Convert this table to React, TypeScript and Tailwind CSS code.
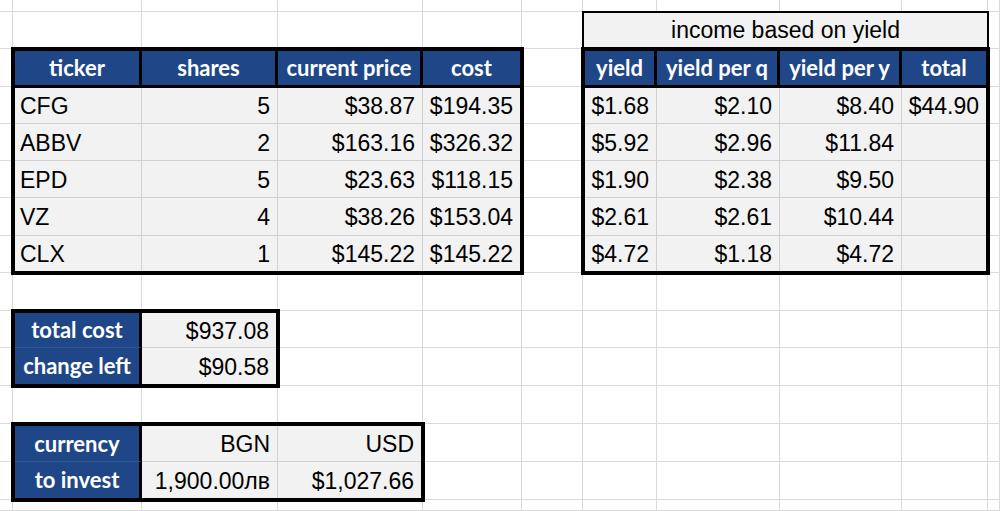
import React from "react";

const COL = ["col-start-1","col-start-2","col-start-3","col-start-4","col-start-5","col-start-6","col-start-7","col-start-8","col-start-9","col-start-10","col-start-11"];
const ROW = ["row-start-1","row-start-2","row-start-3","row-start-4","row-start-5","row-start-6","row-start-7","row-start-8","row-start-9","row-start-10","row-start-11","row-start-12","row-start-13","row-start-14","row-start-15"];

const HEAD = "flex items-center justify-center bg-[#1f4787] text-white font-bold text-[22px] leading-none font-['Lato',sans-serif] whitespace-nowrap";
const DATA = "flex items-center pt-[2px] bg-[#f2f2f2] text-black text-[23px] leading-none whitespace-nowrap border-[#d0d0d0]";

function HeadRow({ labels }: { labels: string[] }) {
  return (
    <>
      {labels.map((l, i) => (
        <div
          key={l}
          className={`${HEAD} border-b-[3px] border-black ${i < labels.length - 1 ? "border-r-[3px]" : ""}`}
        >
          {l}
        </div>
      ))}
    </>
  );
}

function DataRows({ rows, leftFirst }: { rows: string[][]; leftFirst: boolean }) {
  return (
    <>
      {rows.map((r, ri) =>
        r.map((v, ci) => (
          <div
            key={`${ri}-${ci}`}
            className={`${DATA} ${leftFirst && ci === 0 ? "justify-start pl-[5px]" : "justify-end pr-[7px]"} ${ri < rows.length - 1 ? "border-b" : ""} ${ci < r.length - 1 ? "border-r" : ""}`}
          >
            {v}
          </div>
        ))
      )}
    </>
  );
}

export default function App() {
  const bg: React.ReactNode[] = [];
  for (let r = 0; r < 15; r++) {
    for (let c = 0; c < 11; c++) {
      bg.push(
        <div key={`bg-${r}-${c}`} className={`${COL[c]} ${ROW[r]} border-r border-b border-[#dadada]`} />
      );
    }
  }

  const main = [
    ["CFG", "5", "$38.87", "$194.35"],
    ["ABBV", "2", "$163.16", "$326.32"],
    ["EPD", "5", "$23.63", "$118.15"],
    ["VZ", "4", "$38.26", "$153.04"],
    ["CLX", "1", "$145.22", "$145.22"],
  ];
  const income = [
    ["$1.68", "$2.10", "$8.40", "$44.90"],
    ["$5.92", "$2.96", "$11.84", ""],
    ["$1.90", "$2.38", "$9.50", ""],
    ["$2.61", "$2.61", "$10.44", ""],
    ["$4.72", "$1.18", "$4.72", ""],
  ];

  return (
    <div className="w-[1000px] h-[511px] overflow-hidden bg-white font-['Liberation_Sans',Arial,sans-serif] grid grid-cols-[13px_129px_136px_145px_99px_61px_74px_123px_122px_86px_12px] grid-rows-[12px_37px_38px_37px_37px_37px_38px_37px_38px_37px_38px_38px_38px_38px_11px]">
      {bg}

      {/* main table */}
      <div className="col-start-2 col-span-4 row-start-3 row-span-6 -m-[2px] border-4 border-black grid grid-cols-[127px_136px_145px_97px] grid-rows-[37px_36px_37px_37px_38px_35px]">
        <HeadRow labels={["ticker", "shares", "current price", "cost"]} />
        <DataRows rows={main} leftFirst />
      </div>

      {/* income title */}
      <div className="col-start-7 col-span-4 row-start-2 -mx-px -mt-px border-2 border-black bg-[#f2f2f2] flex items-center justify-center pt-[1px] text-[23px] leading-none text-black whitespace-nowrap">
        income based on yield
      </div>

      {/* income table */}
      <div className="col-start-7 col-span-4 row-start-3 row-span-6 -m-[2px] border-4 border-black grid grid-cols-[72px_123px_122px_84px] grid-rows-[37px_36px_37px_37px_38px_35px]">
        <HeadRow labels={["yield", "yield per q", "yield per y", "total"]} />
        <DataRows rows={income} leftFirst={false} />
      </div>

      {/* total cost */}
      <div className="col-start-2 col-span-2 row-start-10 row-span-2 -m-[2px] border-4 border-black grid grid-cols-[127px_134px] grid-rows-[35px_36px]">
        <div className={`${HEAD} border-r-[3px] border-b border-r-black border-b-[#2d5594]`}>total cost</div>
        <div className={`${DATA} justify-end pr-[7px] border-b`}>$937.08</div>
        <div className={`${HEAD} border-r-[3px] border-black`}>change left</div>
        <div className={`${DATA} justify-end pr-[7px]`}>$90.58</div>
      </div>

      {/* currency */}
      <div className="col-start-2 col-span-3 row-start-13 row-span-2 -m-[2px] border-4 border-black grid grid-cols-[127px_136px_143px] grid-rows-[36px_36px]">
        <div className={`${HEAD} border-r-[3px] border-b border-r-black border-b-[#2d5594]`}>currency</div>
        <div className={`${DATA} justify-end pr-[7px] border-b border-r`}>BGN</div>
        <div className={`${DATA} justify-end pr-[7px] border-b`}>USD</div>
        <div className={`${HEAD} border-r-[3px] border-black`}>to invest</div>
        <div className={`${DATA} justify-end pr-[7px] border-r`}>1,900.00лв</div>
        <div className={`${DATA} justify-end pr-[7px]`}>$1,027.66</div>
      </div>
    </div>
  );
}
